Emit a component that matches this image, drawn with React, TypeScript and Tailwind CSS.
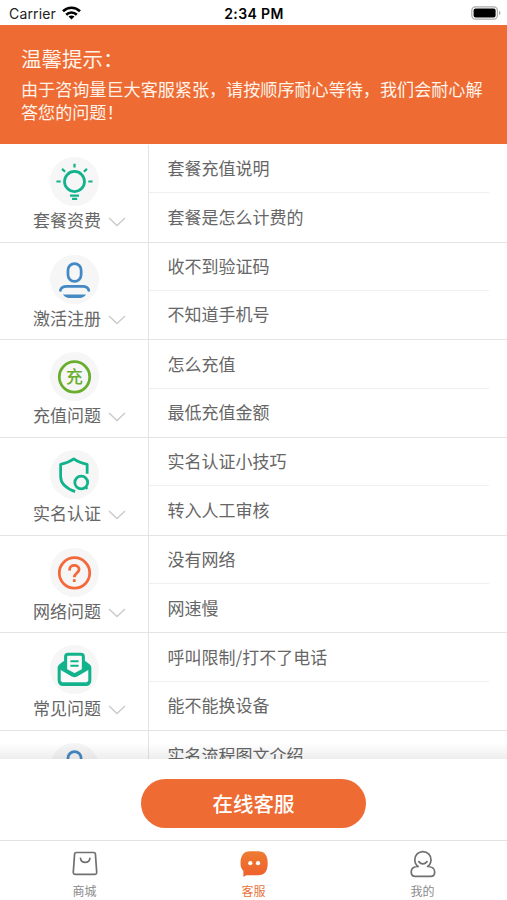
import React from "react";

const GREEN = "#12b38c";
const BLUE = "#4589c4";

function IconCircle({ children }: { children: React.ReactNode }) {
  return (
    <svg
      className="h-[49px] w-[49px] shrink-0"
      viewBox="0 0 48 48"
      fill="none"
      strokeWidth="2.7"
      strokeLinecap="round"
      strokeLinejoin="round"
    >
      <circle cx="24" cy="24" r="24" fill="#f6f6f6" />
      {children}
    </svg>
  );
}

function BulbIcon() {
  return (
    <IconCircle>
      <g stroke={GREEN}>
        <circle cx="24" cy="24" r="9.8" />
        <path
          strokeWidth="2.2"
          strokeLinecap="butt"
          d="M24 6.600v3.800M6.300 24h4.200M37.500 24h4.200M11.800 11.600l3 2.900M36.200 11.600l-3 2.900M19.600 37.900h8.800M21.600 41h5"
        />
      </g>
    </IconCircle>
  );
}

function UserIcon() {
  return (
    <IconCircle>
      <rect x="17.6" y="8.4" width="12.9" height="17.400" rx="6.45" stroke={BLUE} />
      <path
        d="M10.200 34.600c.6-2.200 3-3.800 6-3.800h15.800c3 0 5.400 1.600 6 3.800"
        stroke={BLUE}
      />
      <path d="M12.600 38.600h22.800c-2 2.600-4.400 3.600-7.400 3.600h-8c-3 0-5.400-1-7.400-3.600z" fill={BLUE} />
    </IconCircle>
  );
}

function RechargeIcon() {
  return (
    <IconCircle>
      <circle cx="24" cy="24.4" r="14.9" stroke="#68ae2c" />
      <text
        x="24"
        y="30.3"
        textAnchor="middle"
        fontSize="16.5"
        fontWeight="500"
        fill="#68ae2c"
      >
        充
      </text>
    </IconCircle>
  );
}

function ShieldIcon() {
  return (
    <IconCircle>
      <g stroke={GREEN} strokeLinecap="butt">
        <path d="M36.400 23.200V14C31 13.200 27 11.500 23.300 8.800C19.600 11.500 15.600 13.200 10.400 14v12c0 7 5.400 11.700 14.200 14.800" />
        <circle cx="30.6" cy="31.8" r="6.3" />
        <path d="M35.200 36.600l1.400 1.400" strokeWidth="2.4" />
      </g>
    </IconCircle>
  );
}

function QuestionIcon() {
  return (
    <IconCircle>
      <g stroke="#f4683a">
        <circle cx="24" cy="24.4" r="14.9" />
        <path
          strokeLinecap="butt"
          d="M19.200 22v-.8c0-2.500 2-4.100 4.600-4.100s4.700 1.500 4.700 3.900c0 3.300-4.700 3.700-4.700 7.600M23.800 30.600v2.800"
        />
      </g>
    </IconCircle>
  );
}

function MailIcon() {
  return (
    <IconCircle>
      <path d="M13 16L8.500 19.500Q7.500 20.500 7.500 22v12c0 4 2 6.200 6 6.200h21c4 0 6-2.200 6-6.200V22q0-1.500-1-2.500L35 16z" fill={GREEN} />
      <path d="M10.500 24.500V35l1.500 1.400h24l1.500-1.400V24.500l-10.900 6.400q-2.600 1.400-5.200 0z" fill="#fafafa" />
      <path
        d="M15.300 24.500V11.500c0-1.500.9-2.400 2.400-2.400h12.600c1.500 0 2.400.9 2.400 2.400v13L24 29.200z"
        fill="#fafafa"
        stroke={GREEN}
        strokeWidth="3"
      />
      <path d="M20 16h8M20 20.300h8" stroke={GREEN} strokeWidth="2" strokeLinecap="butt" />
    </IconCircle>
  );
}

type SectionData = {
  name?: string;
  icon: React.ReactNode;
  items: string[];
};

const sections: SectionData[] = [
  { name: "套餐资费", icon: <BulbIcon />, items: ["套餐充值说明", "套餐是怎么计费的"] },
  { name: "激活注册", icon: <UserIcon />, items: ["收不到验证码", "不知道手机号"] },
  { name: "充值问题", icon: <RechargeIcon />, items: ["怎么充值", "最低充值金额"] },
  { name: "实名认证", icon: <ShieldIcon />, items: ["实名认证小技巧", "转入人工审核"] },
  { name: "网络问题", icon: <QuestionIcon />, items: ["没有网络", "网速慢"] },
  { name: "常见问题", icon: <MailIcon />, items: ["呼叫限制/打不了电话", "能不能换设备"] },
  { icon: <UserIcon />, items: ["实名流程图文介绍"] },
];

function StatusBar() {
  return (
    <div className="grid h-[25px] shrink-0 grid-cols-3 items-center pt-[2px] pr-[6px] pl-[9px] font-[Inter] text-[#222]">
      <div className="flex items-center gap-[6px]">
        <span className="text-[14px] tracking-[0.15px]">Carrier</span>
        <svg className="mb-[2px] h-[14px] w-[19px]" viewBox="0 0 19 14" fill="none" stroke="#000" strokeWidth="2.6">
          <path d="M1 5.300C5.800.6 13.200.6 18 5.300" />
          <path d="M4.200 8.700c3-2.900 7.600-2.900 10.600 0" />
          <path d="M9.500 13.500L6.500 10.600c1.700-1.600 4.300-1.600 6 0z" fill="#000" stroke="none" />
        </svg>
      </div>
      <span className="pr-[2px] text-center text-[14px] font-semibold tracking-[0.4px] whitespace-nowrap text-black">
        2:34 PM
      </span>
      <svg className="mb-[1px] h-[14px] w-[30px] justify-self-end" viewBox="0 0 30 14">
        <rect x=".8" y=".8" width="25.6" height="12.4" rx="3.6" fill="#fff" stroke="#aaa" strokeWidth="1.2" />
        <rect x="2.6" y="2.6" width="22" height="8.8" rx="2" fill="#000" />
        <path d="M28 4.800c2 .8 2 3.600 0 4.400z" fill="#aaa" />
      </svg>
    </div>
  );
}

function Section({ name, icon, items }: SectionData) {
  return (
    <div className="flex h-[97.7px] shrink-0 border-b border-[#e4e4e4]">
      <div className="flex w-[149px] shrink-0 flex-col items-center border-r border-[#e4e4e4] pt-[12px]">
        {icon}
        {name && (
          <div className="flex w-full items-center pl-[33px] leading-[27px]">
            <span>{name}</span>
            <svg className="mt-[5px] ml-[7px] h-[10px] w-[18px]" viewBox="0 0 18 10" fill="none" stroke="#c9c9c9" strokeWidth="1.3">
              <path d="M1 1l8 7.500L17 1" />
            </svg>
          </div>
        )}
      </div>
      <div className="flex flex-1 flex-col">
        {items.map((item) => (
          <div
            key={item}
            className="mr-[18px] flex h-1/2 items-center border-b border-[#efefef] pb-[1px] pl-[18.5px] last:border-transparent"
          >
            {item}
          </div>
        ))}
      </div>
    </div>
  );
}

function TabBar() {
  return (
    <div className="grid h-[60px] shrink-0 grid-cols-3 border-t border-[#e2e2e2] pt-[9px] text-[12px] leading-[18px] text-[#8a8a8a]">
      <div className="flex flex-col items-center gap-[4px]">
        <svg className="h-[28px] w-[28px]" viewBox="0 0 28 28" fill="none" stroke="#707070" strokeWidth="1.7" strokeLinecap="round">
          <path d="M5.200 2.500h17.600c1 0 1.500.5 1.600 1.400l1.300 18.200c.1 1.500-.6 2.300-2 2.300H4.300c-1.400 0-2.100-.8-2-2.300L3.600 3.900c.1-.9.600-1.400 1.600-1.400z" />
          <path d="M9.500 8.400c.4 2.600 2.200 4 4.700 4s4.300-1.400 4.700-4" />
        </svg>
        <span>商城</span>
      </div>
      <div className="flex flex-col items-center gap-[4px] text-[#e7733a]">
        <svg className="h-[28px] w-[28px]" viewBox="0 0 28 28">
          <defs>
            <linearGradient id="chat" x1="0" y1="0" x2="0" y2="1">
              <stop offset="0" stopColor="#ee7c32" />
              <stop offset="1" stopColor="#ee5f2d" />
            </linearGradient>
          </defs>
          <path d="M10 1.300h8c7 0 9.700 4.500 9.700 12 0 8-3 12-9.700 12H8c-1.800 0-3 .4-4.600 1.700V21C1.300 18.800.5 16.500.5 13.300c0-7.500 3-12 9.500-12z" fill="url(#chat)" />
          <circle cx="10.3" cy="13.2" r="2.1" fill="#fff" />
          <circle cx="18" cy="13.2" r="2.1" fill="#fff" />
        </svg>
        <span>客服</span>
      </div>
      <div className="flex flex-col items-center gap-[4px]">
        <svg className="h-[28px] w-[28px]" viewBox="0 0 28 28" fill="none" stroke="#707070" strokeWidth="1.7" strokeLinecap="round" strokeLinejoin="round">
          <path d="M9.200 16.500C7 15 5.800 12.400 5.800 9.700a8.100 8.100 0 0 1 16.200 0c0 2.700-1.200 5.300-3.400 6.800 4.200 0 7.100 2.100 7.100 5.400 0 2.900-1.400 4.400-4 4.400H6.200c-2.600 0-4-1.500-4-4.400 0-3.300 2.800-5.400 7-5.400z" />
          <path d="M9.800 11.600c2.400 3 5.800 3 8.200 0" />
        </svg>
        <span>我的</span>
      </div>
    </div>
  );
}

export default function App() {
  return (
    <div className="flex h-[900px] w-[507px] flex-col overflow-hidden bg-white font-['Noto_Sans_CJK_SC',sans-serif] text-[17px] text-[#666]">
      <StatusBar />
      <div className="h-[119px] shrink-0 bg-[#ee6b33] pt-[18px] pr-[20px] pl-[21px] text-[#fff3ea]">
        <h1 className="text-[20.5px] leading-[30px]">温馨提示：</h1>
        <p className="mt-[4px] text-[17.1px] leading-[23px]">
          由于咨询量巨大客服紧张，请按顺序耐心等待，我们会耐心解答您的问题！
        </p>
      </div>
      <div className="flex min-h-0 flex-1 flex-col overflow-hidden pt-[1px]">
        {sections.map((section) => (
          <Section key={section.items[0]} {...section} />
        ))}
      </div>
      <div className="relative flex h-[81px] shrink-0 items-center justify-center bg-white">
        <div className="absolute inset-x-0 bottom-full h-[16px] bg-linear-to-t from-black/7 to-transparent" />
        <button className="mt-[8px] h-[49px] w-[225px] rounded-full bg-[#ee6b33] text-[20.5px] font-medium text-white">
          在线客服
        </button>
      </div>
      <TabBar />
    </div>
  );
}
